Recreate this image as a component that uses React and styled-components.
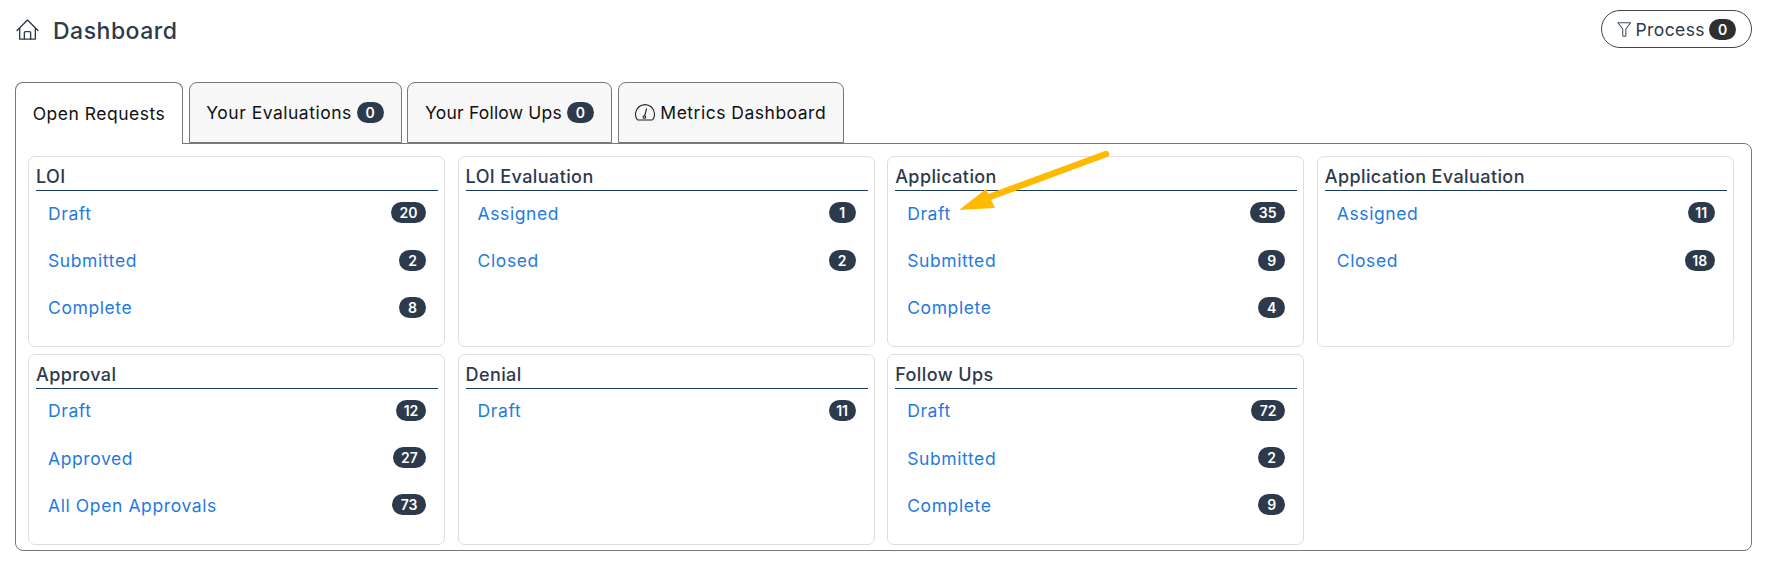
import React from "react";
import styled, { createGlobalStyle } from "styled-components";

const GlobalStyle = createGlobalStyle`
  html, body {
    margin: 0;
    padding: 0;
    background: #fff;
    font-family: Inter, "Noto Sans", "Liberation Sans", sans-serif;
  }
`;

const Page = styled.div`
  position: relative;
  width: 1768px;
  height: 571px;
  padding: 10px 16px 0 15px;
  box-sizing: border-box;
  overflow: hidden;
`;

const Header = styled.header`
  display: flex;
  align-items: center;
  justify-content: space-between;
  height: 38px;
  margin-bottom: 34px;
`;

const PageTitle = styled.h1`
  display: flex;
  align-items: center;
  gap: 14px;
  margin: 4px 0 0;
  padding-left: 1px;
  font-size: 23px;
  font-weight: 500;
  letter-spacing: 0.5px;
  color: #2d3a4b;

  svg {
    margin-top: -4px;
  }
`;

const ProcessButton = styled.button`
  display: flex;
  align-items: center;
  gap: 4px;
  width: 151px;
  height: 38px;
  padding: 0 15px;
  box-sizing: border-box;
  border: 1px solid #444;
  border-radius: 19px;
  background: #fff;
  color: #2d3a4b;
  font: 400 17.5px Inter, "Noto Sans", sans-serif;
  letter-spacing: 0.4px;
`;

const Badge = styled.span`
  display: inline-flex;
  align-items: center;
  justify-content: center;
  flex: none;
  width: ${(p) => p.$width || 27}px;
  height: 21px;
  box-sizing: border-box;
  border-radius: 11px;
  background: ${(p) => (p.$dark ? "#2f2f2f" : "#2d3a4b")};
  color: #fff;
  font-size: 14px;
  font-weight: 600;
  letter-spacing: 0;
`;

const TabBar = styled.nav`
  display: flex;
  gap: 5.5px;
  height: 61px;
`;

const Tab = styled.div`
  display: flex;
  align-items: center;
  justify-content: center;
  gap: 5px;
  width: ${(p) => p.$width}px;
  height: ${(p) => (p.$active ? 62 : 61)}px;
  box-sizing: border-box;
  border: 1px solid #777;
  border-bottom: ${(p) => (p.$active ? "none" : "1px solid #777")};
  border-radius: 8px 8px 0 0;
  background: ${(p) => (p.$active ? "#fff" : "#f7f7f7")};
  color: #111;
  font-size: 17.5px;
  letter-spacing: ${(p) => p.$spacing ?? 0.5}px;
  position: relative;
  z-index: ${(p) => (p.$active ? 1 : 0)};
`;

const Panel = styled.section`
  display: grid;
  grid-template-columns: repeat(4, 417px);
  grid-auto-rows: 191px;
  column-gap: 12.6px;
  row-gap: 6.5px;
  height: 408px;
  padding: 12px 0 0 12px;
  box-sizing: border-box;
  border: 1px solid #777;
  border-radius: 0 8px 8px 8px;
  background: #fff;
`;

const Card = styled.article`
  padding: 6px 6px 0 7px;
  box-sizing: border-box;
  border: 1px solid #ddd;
  border-radius: 7px;
`;

const CardTitle = styled.h2`
  margin: 0;
  height: 27px;
  line-height: 28px;
  border-bottom: 1px solid #1c3d5f;
  font-size: 18px;
  font-weight: 500;
  letter-spacing: 0.4px;
  color: #2d3a4b;
`;

const RowList = styled.ul`
  margin: 0;
  padding: 0 12px;
  list-style: none;
`;

const Row = styled.li`
  display: flex;
  align-items: center;
  justify-content: space-between;
  height: 47.4px;

  ${Badge} {
    margin-bottom: 4px;
  }
`;

const RowLink = styled.a`
  padding-bottom: 3px;
  color: #1f7ae0;
  font-size: 17.5px;
  letter-spacing: 0.6px;
`;

const ArrowOverlay = styled.svg`
  position: absolute;
  left: 950px;
  top: 145px;
  pointer-events: none;
`;

const HomeIcon = () => (
  <svg width="23" height="21" viewBox="0 0 22 20" fill="none" stroke="#2d3a4b" strokeWidth="1.3" strokeLinecap="round" strokeLinejoin="round">
    <path d="M1 11L11 1l10 10" />
    <path d="M3.5 9v10.2h15V9" />
    <path d="M8 19.2V13a1 1 0 0 1 1-1h4a1 1 0 0 1 1 1v6.2" />
  </svg>
);

const FunnelIcon = () => (
  <svg width="16" height="17" viewBox="0 0 16 17" fill="none" stroke="#3c4858" strokeWidth="1.1" strokeLinejoin="round">
    <path d="M1 1h14L9.7 8v7.2a.8.8 0 0 1-.8.8H7.1a.8.8 0 0 1-.8-.8V8L1 1Z" />
  </svg>
);

const GaugeIcon = () => (
  <svg width="20" height="17" viewBox="0 0 20 17" fill="none" stroke="#222" strokeWidth="1.1">
    <path d="M3 16h14a1 1 0 0 0 .8-.5A9.5 9.5 0 1 0 2.2 15.5 1 1 0 0 0 3 16Z" />
    <path d="M9.6 12L11.6 4.5" />
    <circle cx="9.4" cy="13" r="1.3" />
  </svg>
);

const groups = [
  { title: "LOI", rows: [["Draft", 20, 35], ["Submitted", 2], ["Complete", 8]] },
  { title: "LOI Evaluation", rows: [["Assigned", 1], ["Closed", 2]] },
  { title: "Application", rows: [["Draft", 35, 35], ["Submitted", 9], ["Complete", 4]] },
  { title: "Application Evaluation", rows: [["Assigned", 11, 27], ["Closed", 18, 30]] },
  { title: "Approval", rows: [["Draft", 12, 30], ["Approved", 27, 33], ["All Open Approvals", 73, 34]] },
  { title: "Denial", rows: [["Draft", 11, 27]] },
  { title: "Follow Ups", rows: [["Draft", 72, 34], ["Submitted", 2], ["Complete", 9]] },
];

export default function App() {
  return (
    <Page>
      <GlobalStyle />
      <Header>
        <PageTitle>
          <HomeIcon />
          Dashboard
        </PageTitle>
        <ProcessButton>
          <FunnelIcon />
          Process
          <Badge $dark>0</Badge>
        </ProcessButton>
      </Header>
      <TabBar>
        <Tab $active $width={168}>Open Requests</Tab>
        <Tab $width={213}>Your Evaluations <Badge>0</Badge></Tab>
        <Tab $width={205} $spacing={0.2}>Your Follow Ups <Badge>0</Badge></Tab>
        <Tab $width={226.5}><GaugeIcon /> Metrics Dashboard</Tab>
      </TabBar>
      <Panel>
        {groups.map((group) => (
          <Card key={group.title}>
            <CardTitle>{group.title}</CardTitle>
            <RowList>
              {group.rows.map(([label, count, width]) => (
                <Row key={label}>
                  <RowLink>{label}</RowLink>
                  <Badge $width={width}>{count}</Badge>
                </Row>
              ))}
            </RowList>
          </Card>
        ))}
      </Panel>
      <ArrowOverlay width="170" height="75" viewBox="950 145 170 75">
        <path d="M1106 154L984 199" stroke="#ffba00" strokeWidth="6.5" strokeLinecap="round" fill="none" />
        <path d="M959 210L986 189L995 208Z" fill="#ffba00" />
      </ArrowOverlay>
    </Page>
  );
}
